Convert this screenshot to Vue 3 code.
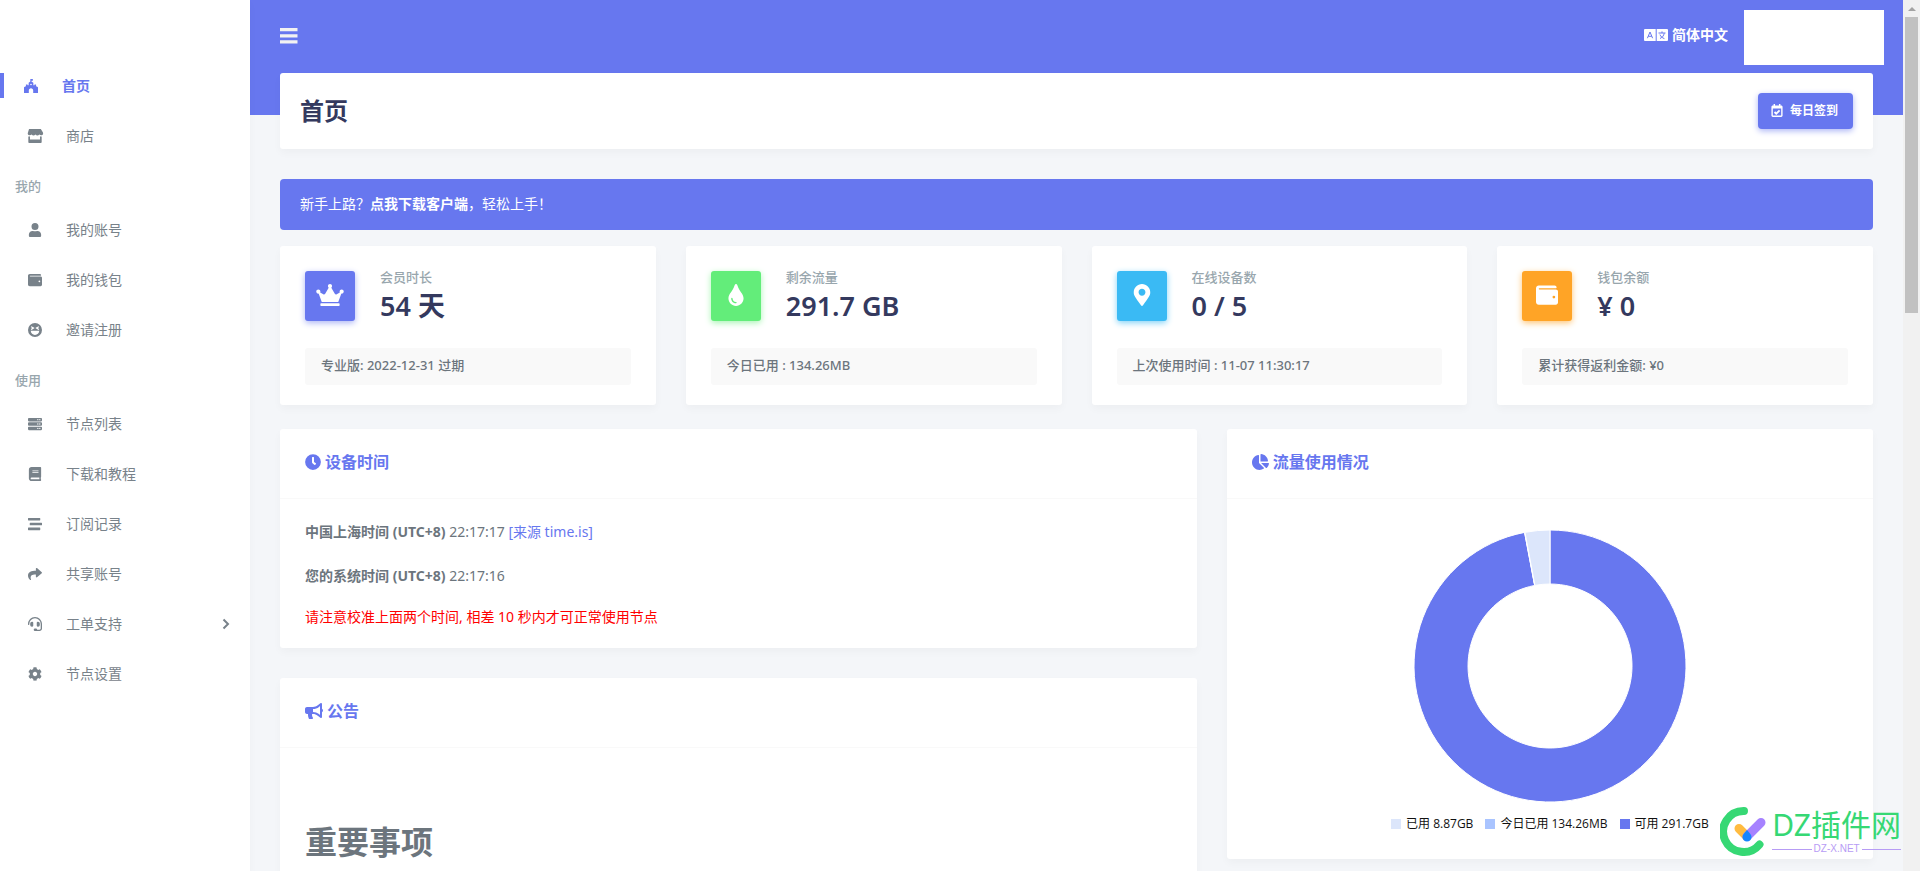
<script setup>
const walletPath = 'M461 128H80a16 16 0 0 1 0-32h384c9 0 16-7 16-16 0-26-21-48-48-48H64C29 32 0 61 0 96v320c0 35 29 64 64 64h397c28 0 51-21 51-48V176c0-26-23-48-51-48zM416 336a32 32 0 1 1 0-64 32 32 0 0 1 0 64z'
const serverRow = (y) => `M32 ${y}h448c18 0 32 14 32 32v64c0 18-14 32-32 32H32c-18 0-32-14-32-32v-64c0-18 14-32 32-32zm400 40a24 24 0 1 0 0 48 24 24 0 0 0 0-48zm-72 0a24 24 0 1 0 0 48 24 24 0 0 0 0-48z`

const icons = {
  home: { box: '0 0 512 512', d: 'M232 0h92v60h-52v30l70 50v90h40v-30h60v66l60 30c6 4 10 12 10 22v194H336v-92c0-44-36-80-80-80s-80 36-80 80v92H0V318c0-10 4-18 10-22l60-30v-66h60v30h40v-90l62-50zM256 172a30 30 0 1 0 0 60 30 30 0 0 0 0-60z' },
  store: { box: '0 0 592 512', d: 'M100 0h392c12 0 22 6 28 16l62 100c28 46 4 110-50 116-32 4-60-8-78-30-36 42-106 42-142 0-36 42-106 42-142 0-18 22-46 34-78 30-54-6-78-70-50-116L72 16C78 6 88 0 100 0zM52 272c20 3 40 0 60-6v118h368V266c20 6 40 9 60 6v200c0 22-18 40-40 40H92c-22 0-40-18-40-40z' },
  user: { box: '0 0 448 512', d: 'M224 256a128 128 0 1 0 0-256 128 128 0 0 0 0 256zm90 32h-17c-46 21-100 21-146 0h-17C60 288 0 348 0 422v42c0 27 21 48 48 48h352c27 0 48-21 48-48v-42c0-74-60-134-134-134z' },
  wallet: { box: '0 0 512 512', d: walletPath },
  laugh: { box: '0 0 496 496', d: 'M248 0a248 248 0 1 0 0 496 248 248 0 0 0 0-496zM124 112l100 58c8 5 8 15 0 20l-100 56-26-28 46-38-46-40zm248 0 26 28-46 40 46 38-26 28-100-56c-8-5-8-15 0-20zM96 278h304c-8 82-68 148-152 148S104 360 96 278z' },
  server: { box: '0 0 512 512', d: serverRow(32) + serverRow(192) + serverRow(352) },
  book: { box: '0 0 448 512', d: 'M96 0h328c13 0 24 11 24 24v336c0 8-4 14-9 19-4 15-4 58 0 73 9 9 9 18 9 24v12c0 13-11 24-24 24H96c-53 0-96-43-96-96V96C0 43 43 0 96 0zm32 126v28h224v-28zm0 66v28h224v-28zM96 384a32 32 0 0 0 0 64h288v-64z' },
  stream: { box: '0 0 512 512', d: 'M16 128h416c9 0 16-7 16-16V48c0-9-7-16-16-16H16C7 32 0 39 0 48v64c0 9 7 16 16 16zm480 80H80c-9 0-16 7-16 16v64c0 9 7 16 16 16h416c9 0 16-7 16-16v-64c0-9-7-16-16-16zm-64 176H16c-9 0-16 7-16 16v64c0 9 7 16 16 16h416c9 0 16-7 16-16v-64c0-9-7-16-16-16z' },
  share: { box: '0 0 512 512', d: 'M504 190 328 38c-16-13-40-3-40 18v80C127 138 0 170 0 322c0 62 40 123 83 154 14 10 33-2 28-18-45-145 22-184 177-186v88c0 21 24 31 40 18l176-152c11-9 11-26 0-36z' },
  headset: { box: '0 0 512 512', d: 'M192 208c0-18-14-32-32-32h-16a64 64 0 0 0-64 64v48a64 64 0 0 0 64 64h16c18 0 32-14 32-32zm176 144a64 64 0 0 0 64-64v-48a64 64 0 0 0-64-64h-16c-18 0-32 14-32 32v112c0 18 14 32 32 32zM256 0C113 0 5 119 0 256v16c0 9 7 16 16 16h16c9 0 16-7 16-16v-16a208 208 0 0 1 416 0v166c0 23-19 42-42 42h-86a48 48 0 0 0-48-48h-32a48 48 0 0 0 0 96h166c50 0 90-40 90-90V256C507 119 399 0 256 0z' },
  cog: { box: '0 0 512 512', d: 'M487.4 315.7l-42.6-24.6c4.3-23.2 4.3-47 0-70.2l42.6-24.6c4.9-2.8 7.1-8.6 5.5-14-11.1-35.6-30-67.8-54.7-94.6-3.8-4.1-10-5.1-14.8-2.3L380.8 110c-17.9-15.4-38.5-27.3-60.8-35.1V25.8c0-5.6-3.9-10.5-9.4-11.7-36.7-8.2-74.3-7.8-109.2 0-5.5 1.2-9.4 6.1-9.4 11.7V75c-22.2 7.9-42.8 19.8-60.8 35.1L88.7 85.5c-4.9-2.8-11-1.9-14.8 2.3-24.7 26.7-43.6 58.9-54.7 94.6-1.7 5.4.6 11.2 5.5 14L67.3 221c-4.3 23.2-4.3 47 0 70.2l-42.6 24.6c-4.9 2.8-7.1 8.6-5.5 14 11.1 35.6 30 67.8 54.7 94.6 3.8 4.1 10 5.1 14.8 2.3l42.6-24.6c17.9 15.4 38.5 27.3 60.8 35.1v49.2c0 5.6 3.9 10.5 9.4 11.7 36.7 8.2 74.3 7.8 109.2 0 5.5-1.2 9.4-6.1 9.4-11.7v-49.2c22.2-7.9 42.8-19.8 60.8-35.1l42.6 24.6c4.9 2.8 11 1.9 14.8-2.3 24.7-26.7 43.6-58.9 54.7-94.6 1.5-5.5-.7-11.3-5.6-14.1zM256 336c-44.1 0-80-35.9-80-80s35.900-80 80-80 80 35.900 80 80-35.900 80-80 80z' },
  crown: { box: '0 0 640 512', d: 'M528 448H112c-8.8 0-16 7.2-16 16v32c0 8.8 7.2 16 16 16h416c8.8 0 16-7.2 16-16v-32c0-8.8-7.2-16-16-16zm64-320c-26.5 0-48 21.5-48 48 0 7.1 1.6 13.7 4.4 19.8L476 239.2c-15.4 9.2-35.3 4-44.2-11.6L350.3 85C361 76.2 368 63 368 48c0-26.5-21.5-48-48-48s-48 21.5-48 48c0 15 7 28.2 17.7 37l-81.5 142.6c-8.9 15.6-28.9 20.8-44.2 11.6l-72.3-43.4c2.7-6 4.4-12.7 4.4-19.8 0-26.5-21.5-48-48-48S0 149.5 0 176s21.5 48 48 48c2.6 0 5.2-.4 7.7-.8L128 416h384l72.3-192.8c2.5.4 5.1.8 7.7.8 26.5 0 48-21.5 48-48s-21.5-48-48-48z' },
  tint: { box: '0 0 352 512', d: 'M205.22 22.09c-7.94-28.78-49.44-30.12-58.44 0C100.01 179.85 0 222.72 0 333.91 0 432.35 78.72 512 176 512s176-79.65 176-178.09c0-111.75-99.79-153.34-146.78-311.82zM176 448c-61.75 0-112-50.25-112-112 0-8.84 7.16-16 16-16s16 7.16 16 16c0 44.11 35.89 80 80 80 8.84 0 16 7.16 16 16s-7.16 16-16 16z' },
  marker: { box: '0 0 384 512', d: 'M172.27 501.67C26.97 291.03 0 269.41 0 192 0 85.96 85.96 0 192 0s192 85.96 192 192c0 77.41-26.97 99.03-172.27 309.67-9.53 13.77-29.93 13.77-39.46 0zM192 272c44.18 0 80-35.82 80-80s-35.82-80-80-80-80 35.82-80 80 35.82 80 80 80z' },
}

const menu = [
  { items: [{ icon: 'home', text: '首页', active: true }, { icon: 'store', text: '商店' }] },
  { title: '我的', items: [{ icon: 'user', text: '我的账号' }, { icon: 'wallet', text: '我的钱包' }, { icon: 'laugh', text: '邀请注册' }] },
  {
    title: '使用',
    items: [
      { icon: 'server', text: '节点列表' },
      { icon: 'book', text: '下载和教程' },
      { icon: 'stream', text: '订阅记录' },
      { icon: 'share', text: '共享账号' },
      { icon: 'headset', text: '工单支持', more: true },
      { icon: 'cog', text: '节点设置' },
    ],
  },
]

const stats = [
  { icon: 'crown', tone: 'primary', label: '会员时长', value: '54 天', note: '专业版: 2022-12-31 过期' },
  { icon: 'tint', tone: 'success', label: '剩余流量', value: '291.7 GB', note: '今日已用 : 134.26MB' },
  { icon: 'marker', tone: 'info', label: '在线设备数', value: '0 / 5', note: '上次使用时间 : 11-07 11:30:17' },
  { icon: 'wallet', tone: 'warning', label: '钱包余额', value: '¥ 0', note: '累计获得返利金额: ¥0' },
]

const usage = [
  { text: '已用 8.87GB', tone: 'used', value: 8.87 },
  { text: '今日已用 134.26MB', tone: 'today', value: 0.13 },
  { text: '可用 291.7GB', tone: 'free', value: 291.7 },
]

// Doughnut slices, clockwise from the top, starting with the largest.
const OUTER = 136
const INNER = 82
const total = usage.reduce((sum, u) => sum + u.value, 0)
const point = (r, a) => `${(OUTER + r * Math.sin(a)).toFixed(2)} ${(OUTER - r * Math.cos(a)).toFixed(2)}`
let angle = 0
const slices = [...usage].reverse().map((u) => {
  const from = angle
  const to = (angle += (u.value / total) * Math.PI * 2)
  const large = to - from > Math.PI ? 1 : 0
  return {
    tone: u.tone,
    d: `M${point(OUTER, from)}A${OUTER} ${OUTER} 0 ${large} 1 ${point(OUTER, to)}L${point(INNER, to)}A${INNER} ${INNER} 0 ${large} 0 ${point(INNER, from)}Z`,
  }
})
</script>

<template>
  <div class="app">
    <aside class="sidebar">
      <nav>
        <template v-for="(group, g) in menu" :key="g">
          <h2 v-if="group.title" class="menu-title">{{ group.title }}</h2>
          <ul>
            <li v-for="item in group.items" :key="item.text" :class="{ active: item.active }">
              <a href="#">
                <svg class="menu-icon" :viewBox="icons[item.icon].box"><path fill-rule="evenodd" :d="icons[item.icon].d" /></svg>
                <span>{{ item.text }}</span>
                <svg v-if="item.more" class="chevron" viewBox="0 0 8 12"><path d="M1.500 1.500 6 6l-4.500 4.500" /></svg>
              </a>
            </li>
          </ul>
        </template>
      </nav>
    </aside>

    <div class="page">
      <header class="navbar">
        <button class="toggle" aria-label="菜单">
          <svg viewBox="0 0 18 16"><path d="M0 0h17.500v3.300H0zM0 6.200h17.500v3.300H0zM0 12.200h17.500v3.300H0z" /></svg>
        </button>
        <div class="nav-right">
          <a class="lang" href="#">
            <svg viewBox="0 0 24 12">
              <rect width="24" height="12" rx="1" />
              <path class="ink" d="M12.200 0v12M3.400 9.200 6 3l2.600 6.200M4.300 7.300h3.400M14.500 4h7M18 2.400V4M16 9.500c2.600-1.200 3.800-3 4.200-5.300M16 5.600c.6 1.800 2.200 3.300 4.400 4" />
            </svg>
            <span>简体中文</span>
          </a>
          <div class="account"></div>
        </div>
      </header>

      <main>
        <section class="card page-head">
          <h1>首页</h1>
          <button class="checkin">
            <svg viewBox="0 0 12 14">
              <path fill-rule="evenodd" d="M2.300 0h1.600v1.700h4.200V0h1.600v1.700h.8c.8 0 1.500.7 1.500 1.500v9.300c0 .8-.7 1.500-1.500 1.500h-9C.7 14 0 13.300 0 12.500V3.200c0-.8.7-1.500 1.500-1.500h.8zM1.500 4.800v7.700h9V4.800z" />
              <path class="tick" d="m3.300 8.600 1.900 1.900 3.600-3.700" />
            </svg>
            <span>每日签到</span>
          </button>
        </section>

        <div class="alert">新手上路？<a href="#">点我下载客户端</a>，轻松上手！</div>

        <section class="stats">
          <article v-for="s in stats" :key="s.label" class="card stat">
            <div class="stat-top">
              <div class="stat-icon" :class="s.tone">
                <svg :viewBox="icons[s.icon].box"><path fill-rule="evenodd" :d="icons[s.icon].d" /></svg>
              </div>
              <div class="stat-text">
                <h4>{{ s.label }}</h4>
                <strong>{{ s.value }}</strong>
              </div>
            </div>
            <p class="note">{{ s.note }}</p>
          </article>
        </section>

        <section class="columns">
          <div class="left">
            <article class="card">
              <h3 class="card-title">
                <svg viewBox="0 0 512 512"><path fill-rule="evenodd" d="M256 4a252 252 0 1 0 0 504 252 252 0 0 0 0-504zm92.500 317-20 25a16 16 0 0 1-22.500 2.500l-67-49.700a40 40 0 0 1-15-31.200V112a16 16 0 0 1 16-16h32a16 16 0 0 1 16 16v144l58 42.500a16 16 0 0 1 2.500 22.500z" /></svg>
                <span>设备时间</span>
              </h3>
              <div class="times">
                <p><b>中国上海时间 (UTC+8)</b> 22:17:17 <a href="#">[来源 time.is]</a></p>
                <p><b>您的系统时间 (UTC+8)</b> 22:17:16</p>
                <p class="warn">请注意校准上面两个时间, 相差 10 秒内才可正常使用节点</p>
              </div>
            </article>
            <article class="card">
              <h3 class="card-title">
                <svg class="wide" viewBox="0 0 576 512"><path d="M576 240c0-23.630-12.950-44.040-32-55.120V32.010C544 23.260 537.020 0 512 0c-7.120 0-14.190 2.380-19.980 7.020l-85.030 68.030C364.280 109.190 310.660 128 256 128H64c-35.350 0-64 28.650-64 64v96c0 35.350 28.650 64 64 64h33.700c-1.390 10.480-2.180 21.140-2.180 32 0 39.770 9.260 77.350 25.560 110.940 5.190 10.690 16.520 17.060 28.400 17.060h74.280c26.050 0 41.690-29.840 25.900-50.560-16.400-21.520-26.150-48.360-26.150-77.440 0-11.110 1.620-21.790 4.410-32H256c54.660 0 108.280 18.810 150.980 52.950l85.030 68.030a32.020 32.020 0 0 0 19.980 7.020c24.920 0 32-22.780 32-32V295.130C563.050 284.040 576 263.630 576 240zm-96 141.420l-33.050-26.440C392.950 311.780 325.120 288 256 288v-96c69.120 0 136.950-23.780 190.950-66.980L480 98.580v282.840z" /></svg>
                <span>公告</span>
              </h3>
              <div class="notice"><h1>重要事项</h1></div>
            </article>
          </div>

          <article class="card right">
            <h3 class="card-title">
              <svg class="pie" viewBox="0 0 544 512"><path d="M527.790 288H290.500l158.030 158.030c6.040 6.040 15.980 6.530 22.190.68 38.700-36.460 65.320-85.610 73.130-140.860 1.340-9.460-6.510-17.850-16.060-17.850zm-15.830-64.800C503.720 103.740 408.260 8.280 288.800.04 279.680-.59 272 7.100 272 16.240V240h223.770c9.140 0 16.820-7.680 16.190-16.800zM224 288V50.710c0-9.550-8.390-17.400-17.840-16.060C86.990 51.490-4.100 155.600.14 280.370 4.500 408.510 114.830 513.590 243.030 511.980c50.400-.63 96.970-16.870 135.260-44.030 7.900-5.600 8.420-17.230 1.570-24.080L224 288z" /></svg>
              <span>流量使用情况</span>
            </h3>
            <div class="chart">
              <svg viewBox="0 0 272 272"><path v-for="s in slices" :key="s.tone" :class="s.tone" :d="s.d" /></svg>
              <ul class="legend">
                <li v-for="u in usage" :key="u.tone"><i :class="u.tone"></i>{{ u.text }}</li>
              </ul>
            </div>
          </article>
        </section>
      </main>
    </div>

    <div class="scrollbar">
      <svg viewBox="0 0 8 4"><path d="M4 0l4 4H0z" /></svg>
      <div class="thumb"></div>
    </div>

    <div class="watermark">
      <svg viewBox="0 0 48 50">
        <path class="ring" d="M24 4.500A20.500 20.500 0 1 0 39.500 38" />
        <path class="amber" d="M19 22l8 8" />
        <path class="violet" d="M41 16 27 30" />
        <path class="blue" d="M27 23.500c2.500 3 4.500 4.500 4.500 7a4.500 4.500 0 0 1-9 0c0-2.500 2-4 4.500-7z" />
      </svg>
      <div class="brand">
        <span class="brand-name">DZ插件网</span>
        <span class="brand-site">DZ-X.NET</span>
      </div>
    </div>
  </div>
</template>

<style>
body {
  margin: 0;
}
</style>

<style scoped>
* {
  box-sizing: border-box;
}
.app {
  --primary: #6777ef;
  position: relative;
  display: flex;
  height: 100vh;
  overflow: hidden;
  background: #f4f6f9;
  color: #6c757d;
  font: 14px/26px "Noto Sans", "Noto Sans CJK SC", sans-serif;
}
h1, h2, h3, h4, p, ul {
  margin: 0;
  padding: 0;
  list-style: none;
}
a {
  color: inherit;
  text-decoration: none;
}
button {
  border: 0;
  font-family: inherit;
  cursor: pointer;
}
svg {
  display: block;
  flex: none;
  fill: currentColor;
}
.sidebar {
  flex: none;
  width: 250px;
  padding-top: 61px;
  background: #fff;
  box-shadow: 0 4px 8px rgba(0, 0, 0, 0.03);
  z-index: 1;
}
.menu-title {
  height: 44px;
  padding: 12px 15px;
  color: #98a6ad;
  font-size: 13px;
  line-height: 26px;
  font-weight: 500;
}
.sidebar li a {
  display: flex;
  align-items: center;
  height: 50px;
  padding: 0 20px 1px;
  color: #78828a;
}
.sidebar li.active a {
  position: relative;
  padding-left: 16px;
  color: var(--primary);
  font-weight: 600;
}
.sidebar li.active a::before {
  content: "";
  position: absolute;
  left: 0;
  top: 12px;
  width: 4px;
  height: 25px;
  background: var(--primary);
}
.menu-icon {
  width: 30px;
  height: 14px;
  margin-right: 16px;
}
.chevron {
  width: 8px;
  height: 12px;
  margin-left: auto;
  fill: none;
  stroke: currentColor;
  stroke-width: 2;
}
.page {
  flex: 1;
  min-width: 0;
  background: linear-gradient(var(--primary) 115px, transparent 115px);
}
.navbar {
  display: flex;
  align-items: flex-start;
  justify-content: space-between;
  height: 73px;
  padding: 10px 19px 0 30px;
}
.toggle {
  padding: 18px 0 0;
  background: none;
  color: #f2f2f2;
}
.toggle svg {
  width: 18px;
  height: 16px;
}
.nav-right {
  display: flex;
  align-items: flex-start;
  gap: 16px;
}
.lang {
  display: flex;
  align-items: center;
  gap: 4px;
  height: 50px;
  color: #fff;
  font-weight: 700;
}
.lang svg {
  width: 24px;
  height: 12px;
}
.ink {
  fill: none;
  stroke: var(--primary);
  stroke-width: 1;
}
.account {
  width: 140px;
  height: 55px;
  background: #fff;
}
main {
  padding: 0 30px;
}
.card {
  border-radius: 3px;
  background: #fff;
  box-shadow: 0 4px 8px rgba(0, 0, 0, 0.03);
}
.page-head {
  display: flex;
  align-items: center;
  justify-content: space-between;
  padding: 20px;
}
.page-head h1 {
  color: #34395e;
  font-size: 24px;
  line-height: 36px;
  font-weight: 700;
}
.checkin {
  display: flex;
  align-items: center;
  gap: 7px;
  height: 36px;
  padding: 0 15px 2px 13px;
  border-radius: 4px;
  background: var(--primary);
  box-shadow: 0 2px 6px #acb5f6;
  color: #fff;
  font-size: 12px;
  font-weight: 700;
}
.checkin svg {
  width: 12px;
  height: 13px;
}
.tick {
  fill: none;
  stroke: currentColor;
  stroke-width: 2;
}
.alert {
  margin: 30px 0 16px;
  padding: 12px 20px 13px;
  border-radius: 4px;
  background: var(--primary);
  color: #fff;
}
.alert a {
  font-weight: 700;
}
.stats {
  display: grid;
  grid-template-columns: repeat(4, 1fr);
  gap: 30px;
}
.stat {
  padding: 25px 25px 20px;
}
.stat-top {
  display: flex;
  gap: 25px;
  height: 52px;
}
.stat-icon {
  display: flex;
  align-items: center;
  justify-content: center;
  width: 50px;
  height: 50px;
  padding-bottom: 2px;
  border-radius: 3px;
  color: #fff;
}
.stat-icon svg {
  width: 28px;
  height: 22px;
}
.primary {
  background: var(--primary);
  box-shadow: 0 2px 6px #acb5f6;
}
.success {
  background: #63ed7a;
  box-shadow: 0 2px 6px #a8f5b4;
}
.info {
  background: #3abaf4;
  box-shadow: 0 2px 6px #82d3f8;
}
.warning {
  background: #ffa426;
  box-shadow: 0 2px 6px #ffc473;
}
.stat-text h4 {
  color: #98a6ad;
  font-size: 13px;
  line-height: 12px;
  font-weight: 500;
}
.stat-text strong {
  display: block;
  margin-top: 5px;
  color: #34395e;
  font-size: 27px;
  line-height: 36px;
  font-weight: 600;
}
.note {
  margin-top: 25px;
  padding: 4px 16px 7px;
  border-radius: 3px;
  background: #f9f9f9;
  font-size: 13px;
  line-height: 26px;
  font-weight: 500;
}
.columns {
  display: grid;
  grid-template-columns: repeat(12, 1fr);
  gap: 30px;
  align-items: start;
  margin-top: 24px;
}
.left {
  grid-column: span 7;
  display: grid;
  gap: 30px;
}
.right {
  grid-column: span 5;
}
.card-title {
  display: flex;
  align-items: center;
  gap: 4px;
  height: 70px;
  padding: 0 25px 4px;
  border-bottom: 1px solid #f9f9f9;
  color: var(--primary);
  font-size: 16px;
  font-weight: 600;
}
.card-title svg {
  width: 16px;
  height: 16px;
}
.card-title .wide {
  width: 18px;
}
.card-title .pie {
  width: 17px;
}
.times {
  padding: 20px 25px 18px;
}
.times p {
  margin-bottom: 18px;
}
.times a {
  color: var(--primary);
}
.times b {
  font-weight: 700;
}
.times .warn {
  margin: -3px 0 0;
  color: #f00;
}
.notice {
  padding: 70px 25px 40px;
}
.notice h1 {
  font-size: 32px;
  line-height: 48px;
  font-weight: 700;
}
.chart {
  display: flex;
  flex-direction: column;
  align-items: center;
  padding: 31px 25px 22px;
}
.chart > svg {
  width: 272px;
  height: 272px;
  stroke: #fff;
  stroke-width: 1;
}
.used {
  fill: #dce6fb;
  background: #dce6fb;
}
.today {
  fill: #a9c4ff;
  background: #a9c4ff;
}
.free {
  fill: var(--primary);
  background: var(--primary);
}
.legend {
  display: flex;
  gap: 12px;
  margin-top: 9px;
  color: #111;
  font: 12px/26px "Open Sans", "Noto Sans CJK SC", sans-serif;
}
.legend li {
  display: flex;
  align-items: center;
  gap: 5px;
}
.legend i {
  width: 10px;
  height: 10px;
}
.scrollbar {
  display: flex;
  flex-direction: column;
  align-items: center;
  gap: 6px;
  flex: none;
  width: 17px;
  padding-top: 7px;
  background: #f1f1f1;
  color: #a3a3a3;
}
.scrollbar svg {
  width: 8px;
  height: 4px;
}
.thumb {
  width: 13px;
  height: 34vh;
  background: #c1c1c1;
}
.watermark {
  position: absolute;
  right: 19px;
  bottom: 14px;
  display: flex;
  gap: 4px;
}
.watermark svg {
  width: 48px;
  height: 51px;
  fill: none;
  stroke-linecap: round;
}
.ring {
  stroke: #36d874;
  stroke-width: 8;
}
.amber {
  stroke: #ffbb40;
  stroke-width: 9;
}
.violet {
  stroke: #a682ff;
  stroke-width: 9;
}
.watermark .blue {
  fill: #1686ff;
}
.brand {
  display: flex;
  flex-direction: column;
  color: #36d874;
}
.brand-name {
  font: 400 30px/38px "Noto Sans", "Noto Sans CJK SC", sans-serif;
}
.brand-site {
  display: flex;
  align-items: center;
  gap: 2px;
  color: #b79cf5;
  font: 10px/10px "Liberation Sans", sans-serif;
}
.brand-site::before,
.brand-site::after {
  content: "";
  flex: 1;
  height: 1px;
  background: #b79cf5;
}
</style>
